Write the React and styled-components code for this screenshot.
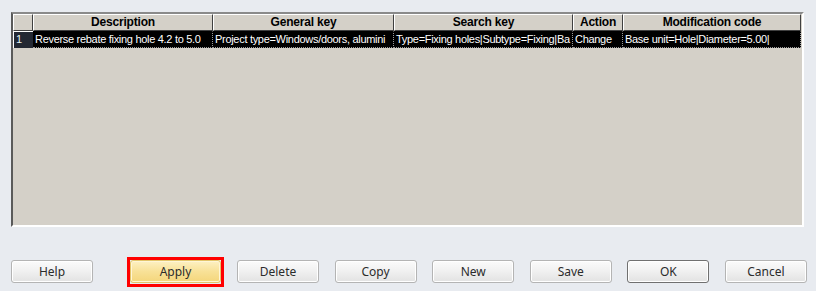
import React from "react";
import styled, { createGlobalStyle } from "styled-components";

const GlobalStyle = createGlobalStyle`
  html, body {
    margin: 0;
    padding: 0;
    background: #e8ebf0;
  }
`;

const Page = styled.div`
  width: 816px;
  height: 291px;
  box-sizing: border-box;
  padding: 12px 12px 0 11px;
  display: flex;
  flex-direction: column;
`;

const GridBox = styled.div`
  height: 215px;
  box-sizing: border-box;
  background: #d4d0c8;
  border-top: 2px solid #8a8a8a;
  border-left: 2px solid #5a5a5a;
  border-right: 2px solid #ffffff;
  border-bottom: 2px solid #ffffff;
  overflow: hidden;
`;

const Table = styled.div`
  display: grid;
  grid-template-columns: 20px 180px 181px 179px 50px 178px;
  grid-auto-rows: 17px;
  font-family: "Liberation Sans", Arial, sans-serif;
  font-size: 11px;
  letter-spacing: -0.3px;
  width: 788px;
`;

const HeadCell = styled.div`
  box-sizing: border-box;
  background: #d4d0c8;
  border-top: 1px solid #ffffff;
  border-left: 1px solid #ffffff;
  border-right: 1px solid #404040;
  border-bottom: 1px solid #404040;
  font-weight: bold;
  font-size: 12px;
  letter-spacing: -0.2px;
  color: #000;
  text-align: center;
  line-height: 15px;
  white-space: nowrap;
  overflow: hidden;
`;

const RowNum = styled.div`
  box-sizing: border-box;
  background: #232833;
  color: #e6f4f4;
  border-left: 1px solid #ffffff;
  border-top: 1px solid #ffffff;
  padding-left: 2px;
  line-height: 15px;
`;

const Cell = styled.div`
  box-sizing: border-box;
  background: #000000;
  color: #ffffff;
  border-right: 1px dotted #9a9a9a;
  border-bottom: 1px dotted #9a9a9a;
  border-top: 1px solid #000;
  padding-left: 2px;
  line-height: 15px;
  white-space: nowrap;
  overflow: hidden;
`;

const ButtonRow = styled.div`
  margin-top: 33px;
  display: flex;
  align-items: flex-start;
  gap: 15.6px;
`;

const Highlight = styled.div`
  box-sizing: border-box;
  width: 97px;
  height: 30px;
  margin: -3px -2.6px 0 18.4px;
  border: 3px solid #ff0000;
  display: flex;
`;

const Button = styled.button`
  box-sizing: border-box;
  width: ${(p) => (p.$wide ? "91px" : "82px")};
  height: 23px;
  padding: 0;
  flex: none;
  font-family: "Noto Sans", "Open Sans", sans-serif;
  font-size: 12px;
  color: #2b2b2b;
  border-radius: 3px;
  border: 1px solid ${(p) => (p.$primary ? "#e3c56a" : p.$default ? "#707070" : "#b4b4b4")};
  background: ${(p) =>
    p.$primary
      ? "linear-gradient(#fdf1c3 0%, #f8e197 50%, #f4d67b 100%)"
      : "linear-gradient(#fbfbfb 0%, #f0f0f0 50%, #e2e2e2 100%)"};
  box-shadow: inset 0 0 0 1px ${(p) => (p.$primary ? "#fff6d6" : "#ffffff")};
  cursor: pointer;
`;

const columns = ["Description", "General key", "Search key", "Action", "Modification code"];
const row = [
  "Reverse rebate fixing hole 4.2 to 5.0",
  "Project type=Windows/doors, alumini",
  "Type=Fixing holes|Subtype=Fixing|Ba",
  "Change",
  "Base unit=Hole|Diameter=5.00|",
];

export default function App() {
  return (
    <>
      <GlobalStyle />
      <Page>
        <GridBox>
          <Table>
            <HeadCell />
            {columns.map((c) => (
              <HeadCell key={c}>{c}</HeadCell>
            ))}
            <RowNum>1</RowNum>
            {row.map((v, i) => (
              <Cell key={i}>{v}</Cell>
            ))}
          </Table>
        </GridBox>
        <ButtonRow>
          <Button>Help</Button>
          <Highlight>
            <Button $primary $wide>Apply</Button>
          </Highlight>
          <Button>Delete</Button>
          <Button>Copy</Button>
          <Button>New</Button>
          <Button>Save</Button>
          <Button $default>OK</Button>
          <Button>Cancel</Button>
        </ButtonRow>
      </Page>
    </>
  );
}
